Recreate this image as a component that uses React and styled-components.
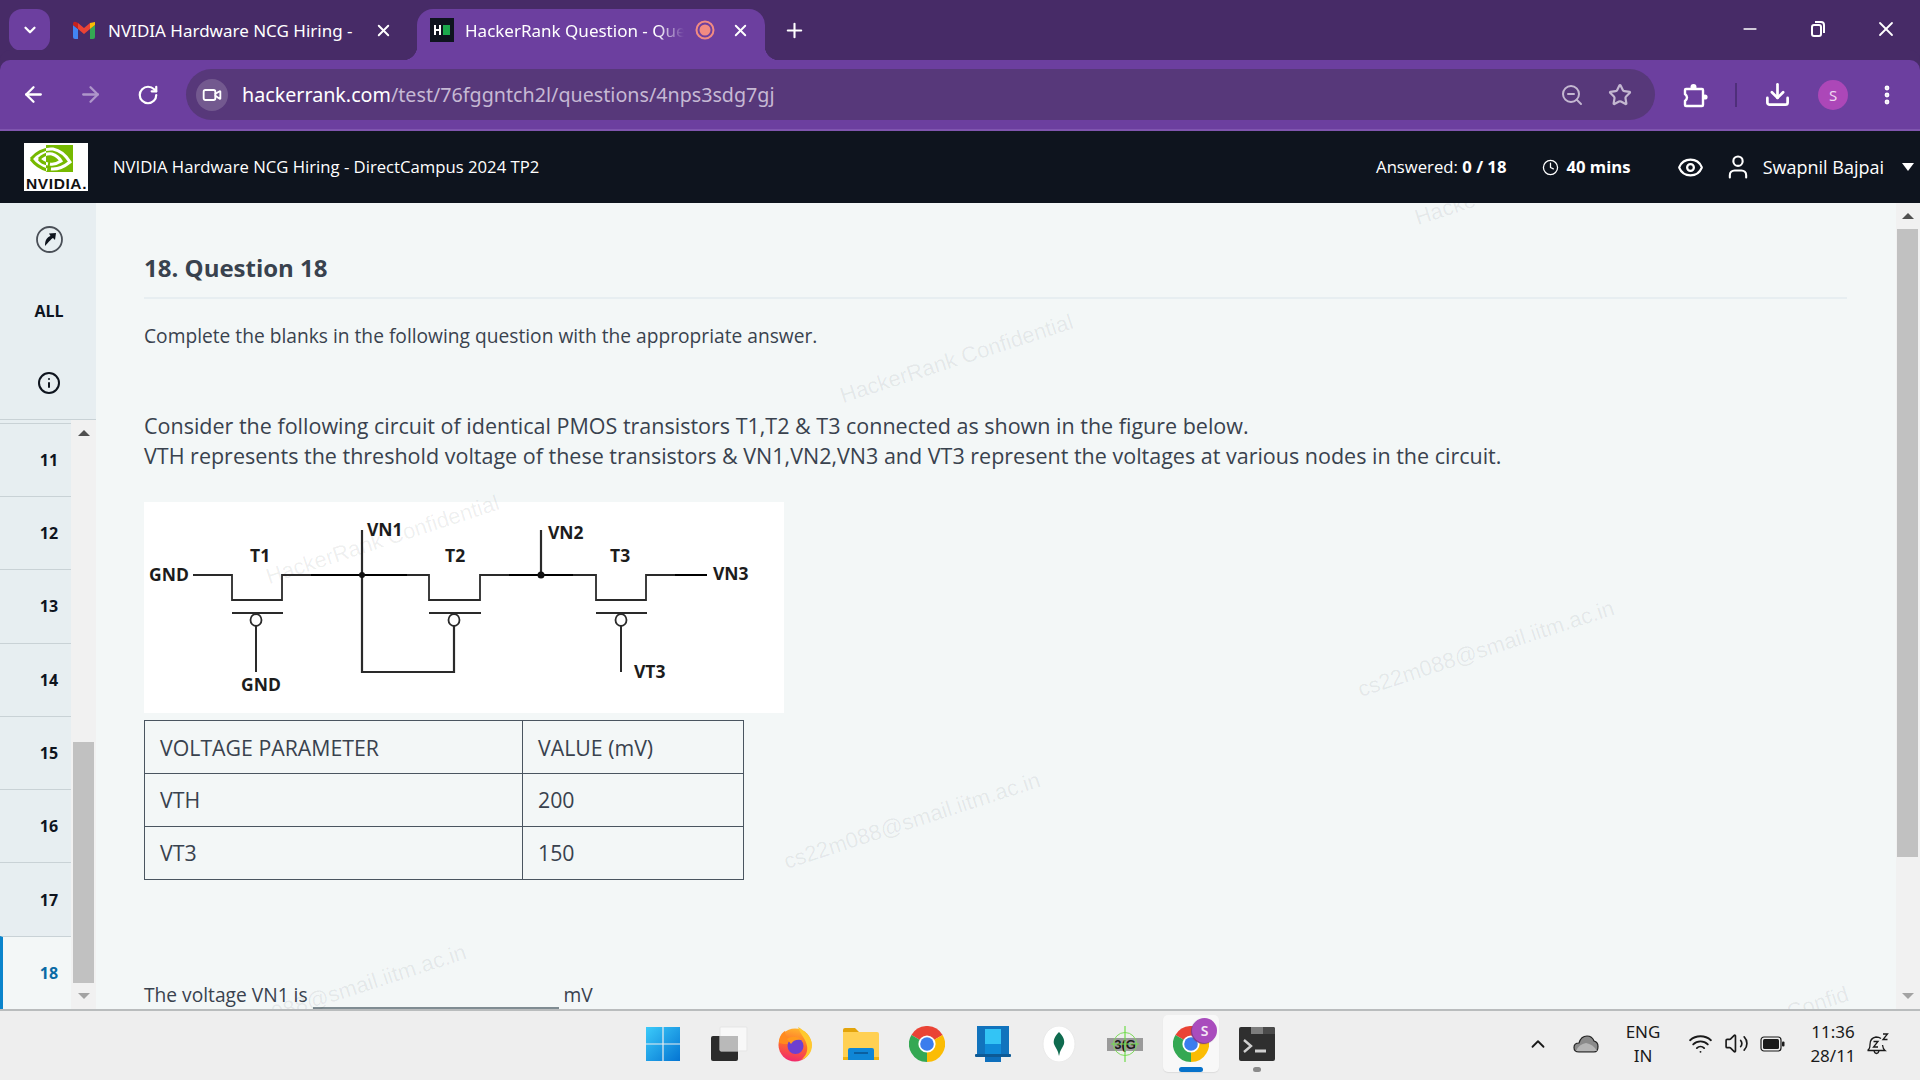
import styled, { createGlobalStyle } from 'styled-components'
import {
  ArrowLeft,
  ArrowRight,
  ChevronDown,
  ChevronUp,
  Clock,
  Download,
  Eye,
  Info,
  Minus,
  MoreVertical,
  Plus,
  RotateCw,
  Star,
  User,
  Video,
  Volume2,
  Wifi,
  X,
  ZoomOut,
} from 'lucide-react'

const QUESTION_NUMBERS = [11, 12, 13, 14, 15, 16, 17, 18]

const WATERMARKS = [
  { text: 'Hacke', x: 1318, y: -7 },
  { text: 'HackerRank Confidential', x: 739, y: 143 },
  { text: 'HackerRank Confidential', x: 165, y: 324 },
  { text: 'cs22m088@smail.iitm.ac.in', x: 1256, y: 433 },
  { text: 'cs22m088@smail.iitm.ac.in', x: 682, y: 605 },
  { text: 'cs22m088@smail.iitm.ac.in', x: 108, y: 777 },
  { text: 'HackerRank Confid', x: 1566, y: 807 },
]

export default function App() {
  return (
    <>
      <GlobalStyle />
      <Page>
        <TabStrip>
          <TabSwitcher>
            <ChevronDown size={18} strokeWidth={3} />
          </TabSwitcher>
          <InactiveTab>
            <GmailIcon />
            <TabTitle>NVIDIA Hardware NCG Hiring -</TabTitle>
            <X size={19} strokeWidth={2.4} />
          </InactiveTab>
          <ActiveTab>
            <HackerRankIcon />
            <FadedTabTitle>HackerRank Question - Que</FadedTabTitle>
            <RecordIcon />
            <ActiveClose size={19} strokeWidth={2.4} />
          </ActiveTab>
          <NewTab>
            <Plus size={23} strokeWidth={2.2} />
          </NewTab>
          <WindowControls>
            <WindowButton>
              <Minus size={20} strokeWidth={2} />
            </WindowButton>
            <WindowButton>
              <RestoreIcon />
            </WindowButton>
            <WindowButton>
              <X size={24} strokeWidth={1.8} />
            </WindowButton>
          </WindowControls>
        </TabStrip>

        <Toolbar>
          <NavButton>
            <ArrowLeft size={25} strokeWidth={2.2} />
          </NavButton>
          <NavButton $disabled>
            <ArrowRight size={25} strokeWidth={2.2} />
          </NavButton>
          <NavButton>
            <RotateCw size={22} strokeWidth={2.4} />
          </NavButton>
          <AddressBar>
            <AddressChip>
              <Video size={20} strokeWidth={2.2} />
            </AddressChip>
            <Url>
              <b>hackerrank.com</b>/test/76fggntch2l/questions/4nps3sdg7gj
            </Url>
            <AddressActions>
              <ZoomOut size={24} strokeWidth={2} />
              <Star size={24} strokeWidth={2.2} />
            </AddressActions>
          </AddressBar>
          <ToolbarActions>
            <ExtensionIcon />
            <ToolbarSeparator />
            <Download size={27} strokeWidth={2.4} />
            <Avatar>S</Avatar>
            <MoreVertical size={24} strokeWidth={2.8} />
          </ToolbarActions>
        </Toolbar>

        <Header>
          <Logo>
            <NvidiaEye />
            <LogoText>NVIDIA.</LogoText>
          </Logo>
          <TestTitle>NVIDIA Hardware NCG Hiring - DirectCampus 2024 TP2</TestTitle>
          <HeaderRight>
            <HeaderText>
              Answered: <b>0 / 18</b>
            </HeaderText>
            <HeaderItem $gap={36}>
              <Clock size={17} strokeWidth={1.8} />
            </HeaderItem>
            <HeaderItem $gap={7}>
              <HeaderText>
                <b>40 mins</b>
              </HeaderText>
            </HeaderItem>
            <HeaderItem $gap={46}>
              <Eye size={27} strokeWidth={2} />
            </HeaderItem>
            <HeaderItem $gap={20}>
              <User size={28} strokeWidth={1.8} />
            </HeaderItem>
            <HeaderItem $gap={11}>
              <UserName>Swapnil Bajpai</UserName>
            </HeaderItem>
            <Caret />
          </HeaderRight>
        </Header>

        <Body>
          <Sidebar>
            <SideTools>
              <SideTool>
                <CompassIcon />
              </SideTool>
              <SideTool>
                <AllLabel>ALL</AllLabel>
              </SideTool>
              <SideTool>
                <Info size={24} strokeWidth={2} />
              </SideTool>
            </SideTools>
            <QuestionNav>
              <QuestionList>
                {QUESTION_NUMBERS.map(number => (
                  <QuestionRow key={number} $active={number === 18}>
                    {number}
                  </QuestionRow>
                ))}
              </QuestionList>
              <NavScrollbar>
                <ArrowUp />
                <NavTrack>
                  <NavThumb />
                </NavTrack>
                <ArrowDown />
              </NavScrollbar>
            </QuestionNav>
          </Sidebar>

          <Main>
            <Content>
              <QuestionTitle>18. Question 18</QuestionTitle>
              <Instruction>
                Complete the blanks in the following question with the
                appropriate answer.
              </Instruction>
              <Statement>
                Consider the following circuit of identical PMOS transistors
                T1,T2 &amp; T3 connected as shown in the figure below.
                <br />
                VTH represents the threshold voltage of these transistors &amp;
                VN1,VN2,VN3 and VT3 represent the voltages at various nodes in
                the circuit.
              </Statement>
              <Circuit />
              <ParamTable>
                <tbody>
                  <tr>
                    <td>VOLTAGE PARAMETER</td>
                    <td>VALUE (mV)</td>
                  </tr>
                  <tr>
                    <td>VTH</td>
                    <td>200</td>
                  </tr>
                  <tr>
                    <td>VT3</td>
                    <td>150</td>
                  </tr>
                </tbody>
              </ParamTable>
              <AnswerLine>
                The voltage VN1 is
                <Blank />
                mV
              </AnswerLine>
            </Content>
            <PageScrollbar>
              <ArrowUp />
              <PageTrack>
                <PageThumb />
              </PageTrack>
              <ArrowDown />
            </PageScrollbar>
            <WatermarkLayer>
              {WATERMARKS.map(mark => (
                <Watermark key={mark.x} $x={mark.x} $y={mark.y}>
                  {mark.text}
                </Watermark>
              ))}
            </WatermarkLayer>
          </Main>
        </Body>

        <Taskbar>
          <span />
          <TaskIcons>
            <TaskIcon>
              <WindowsIcon />
            </TaskIcon>
            <TaskIcon>
              <TaskViewIcon />
            </TaskIcon>
            <TaskIcon>
              <FirefoxIcon />
            </TaskIcon>
            <TaskIcon>
              <FolderIcon />
            </TaskIcon>
            <TaskIcon>
              <ChromeIcon />
            </TaskIcon>
            <TaskIcon>
              <DeviceIcon />
            </TaskIcon>
            <TaskIcon>
              <MongoIcon />
            </TaskIcon>
            <TaskIcon>
              <CrosshairIcon />
            </TaskIcon>
            <TaskIcon $active>
              <ChromeIcon />
              <ProfileBadge>S</ProfileBadge>
            </TaskIcon>
            <TaskIcon $running>
              <TerminalIcon />
            </TaskIcon>
          </TaskIcons>
          <Tray>
            <TrayCell $width={32}>
              <ChevronUp size={22} strokeWidth={2} />
            </TrayCell>
            <TrayCell $width={64}>
              <CloudIcon />
            </TrayCell>
            <TrayCell $width={50}>
              <TrayText>
                ENG
                <br />
                IN
              </TrayText>
            </TrayCell>
            <TrayCell $width={36} $gap={14}>
              <Wifi size={25} strokeWidth={1.8} />
            </TrayCell>
            <TrayCell $width={36}>
              <Volume2 size={25} strokeWidth={1.6} />
            </TrayCell>
            <TrayCell $width={36}>
              <BatteryIcon />
            </TrayCell>
            <TrayCell $width={66} $gap={10}>
              <TrayText>
                11:36
                <br />
                28/11
              </TrayText>
            </TrayCell>
            <TrayCell $width={24}>
              <BellIcon />
            </TrayCell>
          </Tray>
        </Taskbar>
      </Page>
    </>
  )
}

function GmailIcon() {
  return (
    <svg width="24" height="18" viewBox="0 0 24 18" style={{ flexShrink: 0 }}>
      <path d="M1 4v12q0 2 2 2h3V8z" fill="#4285f4" />
      <path d="M23 4v12q0 2-2 2h-3V8z" fill="#34a853" />
      <path d="M18 2l5-1v3l-5 4z" fill="#fbbc04" />
      <path d="M6 8V2l6 5 6-5v6l-6 5z" fill="#ea4335" />
      <path d="M1 4V3q0-3 3-2l2 1v6z" fill="#c5221f" />
    </svg>
  )
}

function HackerRankIcon() {
  return (
    <svg width="24" height="24" viewBox="0 0 24 24" style={{ flexShrink: 0 }}>
      <rect width="24" height="24" fill="#0e141e" />
      <path d="M4 7h2v4h3V7h2v10H9v-4H6v4H4z" fill="#fff" />
      <rect x="13" y="7" width="7" height="10" fill="#1ba94c" />
    </svg>
  )
}

function RecordIcon() {
  return (
    <svg width="20" height="20" viewBox="0 0 20 20" style={{ flexShrink: 0 }}>
      <circle cx="10" cy="10" r="8.5" fill="none" stroke="#f28b82" strokeWidth="2" />
      <circle cx="10" cy="10" r="5.5" fill="#f28b82" />
    </svg>
  )
}

function RestoreIcon() {
  return (
    <svg width="20" height="20" viewBox="0 0 20 20" fill="none" stroke="#fff" strokeWidth="2">
      <rect x="4" y="6" width="9" height="11" rx="2" />
      <path d="M7 3h6q3 0 3 3v8" />
    </svg>
  )
}

function ExtensionIcon() {
  return (
    <svg width="26" height="26" viewBox="0 0 26 26">
      <path
        d="M4 7H20Q21 7 21 8V23Q21 24 20 24H4Q3 24 3 23V19Q7 15.500 3 12V8Q3 7 4 7z"
        fill="none"
        stroke="#fff"
        strokeWidth="2.400"
      />
      <circle cx="11.500" cy="5" r="3" fill="#fff" />
      <circle cx="23" cy="15" r="2.600" fill="#fff" />
    </svg>
  )
}

function NvidiaEye() {
  return (
    <LogoEye width="48" height="28" viewBox="0 0 48 28" fill="none" strokeWidth="3">
      <defs>
        <linearGradient id="eye" gradientUnits="userSpaceOnUse" x1="0" x2="48" y1="0" y2="0">
          <stop offset="0.354" stopColor="#76b900" />
          <stop offset="0.354" stopColor="#fff" />
        </linearGradient>
      </defs>
      <rect x="17" width="27" height="27" fill="#76b900" />
      <g stroke="url(#eye)">
        <path d="M2 14Q11 3 24 4Q34 6 41 17Q31 25 22 24" />
        <path d="M10 14Q16 8 23 9Q29 11 32 16Q26 20 21 19" />
        <path d="M2 14Q8 22 18 25" />
        <path d="M10 14Q13 18 19 19" />
      </g>
    </LogoEye>
  )
}

function CompassIcon() {
  return (
    <svg width="27" height="27" viewBox="0 0 27 27">
      <circle cx="13.500" cy="13.500" r="12.500" fill="none" stroke="#4a4f57" strokeWidth="1.800" />
      <path d="M9 20c0-6 2-8.500 5.500-10L13 7.500l7-.5-1 7-2-2c-2.500 1.500-4 4-8 8z" fill="#0e141e" />
    </svg>
  )
}

function WindowsIcon() {
  return (
    <svg width="36" height="36" viewBox="0 0 36 36">
      <defs>
        <linearGradient id="win" x1="0" y1="0" x2="1" y2="1">
          <stop offset="0" stopColor="#3ccbfa" />
          <stop offset="1" stopColor="#0474d2" />
        </linearGradient>
      </defs>
      <path d="M1 1h16.400v16.400H1zM18.600 1H35v16.400H18.600zM1 18.600h16.400V35H1zM18.600 18.600H35V35H18.600z" fill="url(#win)" />
    </svg>
  )
}

function TaskViewIcon() {
  return (
    <svg width="38" height="36" viewBox="0 0 38 36">
      <rect x="1" y="10" width="27" height="25" rx="2" fill="#2b2b2b" />
      <rect x="10" y="1" width="27" height="24" rx="1" fill="#f8f8f8" stroke="#e5e5e5" />
      <rect x="10" y="10" width="18" height="15" fill="#b9b9b9" />
    </svg>
  )
}

function FirefoxIcon() {
  return (
    <svg width="36" height="36" viewBox="0 0 36 36">
      <defs>
        <linearGradient id="fox" x1="0.600" y1="0" x2="0.400" y2="1">
          <stop offset="0" stopColor="#ffb52e" />
          <stop offset="0.500" stopColor="#ff6a2b" />
          <stop offset="1" stopColor="#f0286e" />
        </linearGradient>
      </defs>
      <circle cx="18" cy="19" r="16.500" fill="url(#fox)" />
      <path d="M21 1c7 4 14 10 14 18 0 8-5 13-11 15 5-4 7-9 6-14-1-7-7-12-9-19z" fill="#ffc92e" />
      <path d="M2 17C2 10 5 7 8 5c0 3 1 5 3 7l5 1-5 5c-3 0-6 0-9-1z" fill="#ff8a1e" />
      <circle cx="18.500" cy="20" r="8" fill="#6e3fd0" />
      <path d="M10 13c4-3 11-3 15 1-5-1-9 0-11 4z" fill="#ff9a1e" />
    </svg>
  )
}

function FolderIcon() {
  return (
    <svg width="36" height="32" viewBox="0 0 36 32">
      <path d="M0 2q0-2 2-2h10l4 4h-16z" fill="#e3a40b" />
      <path d="M0 4h34q2 0 2 2v26H0z" fill="#ffd053" />
      <path d="M0 30v-1h36v3H0z" fill="#f0b30f" />
      <path d="M5 32V22q0-2 2-2h22q2 0 2 2v10z" fill="#0f86d6" />
      <rect x="11" y="24" width="14" height="2" fill="#0a5fa0" />
    </svg>
  )
}

function ChromeIcon() {
  return (
    <svg width="36" height="36" viewBox="-18 -18 36 36">
      <path d="M0 0L15.600-9A18 18 0 0 0-15.600-9z" fill="#ea4335" />
      <path d="M0 0L-15.600-9A18 18 0 0 0 0 18z" fill="#34a853" />
      <path d="M0 0L0 18A18 18 0 0 0 15.600-9z" fill="#fbbc04" />
      <circle r="8.600" fill="#fff" />
      <circle r="6.800" fill="#3b7ded" />
    </svg>
  )
}

function DeviceIcon() {
  return (
    <svg width="36" height="36" viewBox="0 0 36 36">
      <path d="M2 0h32v30H2z" fill="#1173bd" />
      <rect y="28" width="36" height="3" rx="1" fill="#0d5a96" />
      <path d="M10 3h16v15H10z" fill="#33c4f5" />
      <path d="M10 18h16v10H10z" fill="#0f8ad8" />
      <path d="M10 31h16v5H10z" fill="#0d6fbd" />
    </svg>
  )
}

function MongoIcon() {
  return (
    <svg width="34" height="36" viewBox="0 0 34 36">
      <ellipse cx="17" cy="18" rx="16" ry="18" fill="#fff" stroke="#eaeaea" />
      <path d="M17 6c4 4 6 8 5 12-1 3-3 5-4 8l-1 4-1-4c-1-3-3-5-4-8-1-4 1-8 5-12z" fill="#0f6b4f" />
    </svg>
  )
}

function CrosshairIcon() {
  return (
    <svg width="36" height="46" viewBox="0 0 36 46">
      <rect x="0" y="17" width="36" height="13" fill="#9a9a9a" />
      <text x="18" y="28" fontFamily="'Liberation Sans', sans-serif" fontSize="13" fontWeight="700" textAnchor="middle" fill="#1a1a1a">
        3(G
      </text>
      <circle cx="18" cy="23" r="11.500" fill="none" stroke="#7fdc5c" strokeWidth="1" />
      <path d="M18 5v36M4 23h28" stroke="#6fdc4a" strokeWidth="1.200" />
    </svg>
  )
}

function TerminalIcon() {
  return (
    <svg width="36" height="36" viewBox="0 0 36 36">
      <rect y="1" width="36" height="34" rx="2" fill="#2f2f2f" />
      <path d="M12 1h12v7H12z" fill="#7d7d7d" />
      <path d="M24 1h10q2 0 2 2v5H24z" fill="#4a4a4a" />
      <path d="M5 14l7 6-7 6" fill="none" stroke="#d0d0d0" strokeWidth="2.400" />
      <path d="M16 25h11" stroke="#d0d0d0" strokeWidth="3" />
    </svg>
  )
}

function CloudIcon() {
  return (
    <svg width="26" height="18" viewBox="0 0 26 18">
      <path d="M6 17q-5 0-5-4.500t5-4.500q2-7 8-7 5 0 7 5 4 1 4 5.500 0 5.500-4 5.500z" fill="#8a8a8a" stroke="#222" strokeWidth="1.200" />
      <path d="M3 16q3-7 10-8 7 1 11 8z" fill="#b5b5b5" />
    </svg>
  )
}

function BatteryIcon() {
  return (
    <svg width="25" height="16" viewBox="0 0 25 16">
      <rect x="1" y="1" width="20" height="14" rx="3" fill="none" stroke="#1a1a1a" strokeWidth="1.200" />
      <rect x="3" y="3" width="16" height="10" rx="1.500" fill="#1a1a1a" />
      <rect x="22" y="5.500" width="2.500" height="5" rx="1" fill="#1a1a1a" />
    </svg>
  )
}

function BellIcon() {
  return (
    <svg width="24" height="24" viewBox="0 0 24 24" fill="none" stroke="#1a1a1a" strokeWidth="1.300">
      <path d="M1.500 18.500q2.500-1.500 2.500-6 0-6.500 6-7.500 3 0 5 1.500M1.500 18.500H19q-2-1.500-2.500-5.500" />
      <path d="M8 18.500q.5 3 2.500 3t2.500-3" />
      <path d="M7.500 9.500h4.500l-4.500 5.500h4.500M17 2h4.500L17 7.500h4.500" />
    </svg>
  )
}

function Circuit() {
  const transistors = [
    { left: 88, right: 138, gate: 112, stem: true },
    { left: 285, right: 336, gate: 310, stem: false },
    { left: 452, right: 502, gate: 477, stem: true },
  ]
  const labels = [
    { text: 'GND', x: 5, y: 79 },
    { text: 'T1', x: 106, y: 60 },
    { text: 'VN1', x: 223, y: 34 },
    { text: 'T2', x: 301, y: 60 },
    { text: 'VN2', x: 404, y: 37 },
    { text: 'T3', x: 466, y: 60 },
    { text: 'VN3', x: 569, y: 78 },
    { text: 'GND', x: 97, y: 189 },
    { text: 'VT3', x: 490, y: 176 },
  ]
  return (
    <CircuitFigure viewBox="0 0 640 211">
      <g fill="none" stroke="#2a2a2a" strokeWidth="1.800">
        <path d="M49 73H88V98H138V73H285V98H336V73H452V98H502V73H563" />
        <path d="M167 73H263M365 73H429M531 73H563" stroke="#000" strokeWidth="2.200" />
        <path d="M218 28V170H310V124" strokeWidth="2.200" />
        <path d="M397 28V73" strokeWidth="2.200" />
        {transistors.map(item => (
          <g key={item.left}>
            <path d={`M${item.left} 111H${item.right + 1}`} />
            <ellipse cx={item.gate} cy="118" rx="5.500" ry="6" />
            {item.stem && <path d={`M${item.gate} 124V170`} strokeWidth="2" />}
          </g>
        ))}
      </g>
      <circle cx="218" cy="73" r="3" fill="#111" />
      <circle cx="397" cy="73" r="3.500" fill="#111" />
      <g fontFamily="'Open Sans', sans-serif" fontSize="17.500" fontWeight="700" fill="#1c1c1c">
        {labels.map(label => (
          <text key={label.text + label.x} x={label.x} y={label.y}>
            {label.text}
          </text>
        ))}
      </g>
    </CircuitFigure>
  )
}

const GlobalStyle = createGlobalStyle`
  html, body {
    margin: 0;
    padding: 0;
    height: 100%;
    overflow: hidden;
  }
  * {
    box-sizing: border-box;
  }
  body {
    font-family: 'Open Sans', sans-serif;
    color: #39424e;
  }
`
const Page = styled.div`
  width: 1920px;
  height: 1080px;
  display: flex;
  flex-direction: column;
  overflow: hidden;
`
const TabStrip = styled.div`
  height: 60px;
  flex-shrink: 0;
  display: flex;
  padding: 9px 0 0 9px;
  background: #472b67;
  color: #fff;
  font-family: 'Noto Sans', sans-serif;
  font-size: 17px;
`
const TabSwitcher = styled.div`
  width: 41px;
  height: 42px;
  border-radius: 13px;
  background: #6c3f9f;
  display: flex;
  align-items: center;
  justify-content: center;
`
const InactiveTab = styled.div`
  width: 367px;
  height: 51px;
  padding: 0 24px 9px 22px;
  display: flex;
  align-items: center;
  gap: 12px;
`
const ActiveTab = styled.div`
  position: relative;
  width: 348px;
  height: 51px;
  padding: 0 15px 9px 13px;
  display: flex;
  align-items: center;
  gap: 11px;
  background: #6c3f9f;
  border-radius: 16px 16px 0 0;

  &::before,
  &::after {
    content: '';
    position: absolute;
    bottom: 0;
    width: 14px;
    height: 14px;
  }
  &::before {
    left: -14px;
    background: radial-gradient(circle at 0 0, transparent 14px, #6c3f9f 14.500px);
  }
  &::after {
    right: -14px;
    background: radial-gradient(circle at 100% 0, transparent 14px, #6c3f9f 14.500px);
  }
`
const TabTitle = styled.span`
  flex: 1;
  min-width: 0;
  white-space: nowrap;
`
const FadedTabTitle = styled(TabTitle)`
  -webkit-mask-image: linear-gradient(90deg, #000 88%, transparent);
  mask-image: linear-gradient(90deg, #000 88%, transparent);
`
const ActiveClose = styled(X)`
  margin-left: 5px;
  flex-shrink: 0;
`
const NewTab = styled.div`
  margin-left: 18px;
  height: 42px;
  display: flex;
  align-items: center;
`
const WindowControls = styled.div`
  margin-left: auto;
  display: flex;
`
const WindowButton = styled.div`
  width: 68px;
  height: 32px;
  margin-top: 4px;
  display: flex;
  align-items: center;
  justify-content: center;
`
const Toolbar = styled.div`
  height: 71px;
  flex-shrink: 0;
  display: flex;
  align-items: flex-start;
  padding: 9px 21px 0 5px;
  background: #6c3f9f;
  border-bottom: 2px solid #7f55ae;
  border-radius: 10px 10px 0 0;
  color: #fff;
  box-shadow: 0 -10px 0 #472b67;
`
const NavButton = styled.div`
  width: 57px;
  height: 51px;
  display: flex;
  align-items: center;
  justify-content: center;
  opacity: ${props => (props.$disabled ? 0.45 : 1)};
`
const AddressBar = styled.div`
  flex: 1;
  height: 51px;
  margin-left: 10px;
  padding: 0 23px 0 10px;
  display: flex;
  align-items: center;
  border-radius: 26px;
  background: #57387a;
`
const AddressChip = styled.div`
  width: 32px;
  height: 32px;
  border-radius: 50%;
  background: #73598f;
  display: flex;
  align-items: center;
  justify-content: center;
`
const Url = styled.div`
  margin-left: 14px;
  font-family: 'Noto Sans', sans-serif;
  font-size: 19.700px;
  color: #c6b9d4;

  b {
    font-weight: 400;
    color: #fff;
  }
`
const AddressActions = styled.div`
  margin-left: auto;
  display: flex;
  gap: 24px;
  color: #c4b8d1;
`
const ToolbarActions = styled.div`
  margin-left: 27px;
  height: 51px;
  display: flex;
  align-items: center;
  gap: 27px;
`
const ToolbarSeparator = styled.div`
  width: 2px;
  height: 24px;
  background: #4f2f7a;
`
const Avatar = styled.div`
  width: 30px;
  height: 30px;
  border-radius: 50%;
  background: #ac47b8;
  display: flex;
  align-items: center;
  justify-content: center;
  font-family: 'Noto Sans', sans-serif;
  font-size: 15px;
  color: #f0d8f2;
`
const Header = styled.header`
  height: 72px;
  flex-shrink: 0;
  display: flex;
  align-items: center;
  padding: 0 6px 0 24px;
  background: #0e141e;
  color: #fff;
  font-size: 16.700px;
`
const Logo = styled.div`
  width: 64px;
  height: 48px;
  padding: 2px 0 0 5px;
  background: #fff;
  overflow: hidden;
`
const LogoEye = styled.svg`
  display: block;
`
const LogoText = styled.div`
  margin: 3px 0 0 -3px;
  font-family: 'Liberation Sans', sans-serif;
  font-weight: 700;
  font-size: 15.500px;
  line-height: 15px;
  color: #111;
  letter-spacing: 0.600px;
  white-space: nowrap;
`
const TestTitle = styled.div`
  margin: 0 0 2px 25px;
`
const HeaderRight = styled.div`
  margin-left: auto;
  display: flex;
  align-items: center;
`
const HeaderText = styled.span`
  margin-bottom: 2px;
`
const HeaderItem = styled.div`
  margin-left: ${props => props.$gap}px;
  display: flex;
  align-items: center;
`
const UserName = styled.span`
  font-size: 18px;
`
const Caret = styled.div`
  margin-left: 18px;
  width: 0;
  height: 0;
  border-left: 6px solid transparent;
  border-right: 6px solid transparent;
  border-top: 8px solid #fff;
`
const Body = styled.div`
  flex: 1;
  min-height: 0;
  display: flex;
`
const Sidebar = styled.aside`
  width: 96px;
  flex-shrink: 0;
  display: flex;
  flex-direction: column;
  background: #e7eef1;
`
const SideTools = styled.div`
  height: 217px;
  flex-shrink: 0;
  display: grid;
  grid-template-rows: repeat(3, 72px);
  border-bottom: 1px solid #c9d2d6;
`
const SideTool = styled.div`
  padding-left: 2px;
  display: flex;
  align-items: center;
  justify-content: center;
  color: #0e141e;
`
const AllLabel = styled.span`
  font-size: 16px;
  font-weight: 700;
`
const QuestionNav = styled.div`
  flex: 1;
  min-height: 0;
  display: flex;
`
const QuestionList = styled.div`
  width: 71px;
  padding-top: 3px;
  display: flex;
  flex-direction: column;
  justify-content: flex-end;
  overflow: hidden;
`
const QuestionRow = styled.div`
  height: 73.300px;
  flex-shrink: 0;
  display: flex;
  align-items: center;
  justify-content: center;
  padding-left: ${props => (props.$active ? '24px' : '27px')};
  font-size: 16px;
  font-weight: 700;
  color: ${props => (props.$active ? '#0a6aa5' : '#0e141e')};
  background: ${props => (props.$active ? '#f3f7f7' : 'transparent')};
  border-top: 1px solid #c9d2d6;
  border-left: ${props => (props.$active ? '3px solid #0a84cc' : '0')};
`
const NavScrollbar = styled.div`
  width: 25px;
  display: flex;
  flex-direction: column;
  background: #f1f1f1;
`
const NavTrack = styled.div`
  flex: 1;
  min-height: 0;
  padding: 0 2px;
  display: flex;
  flex-direction: column;
  justify-content: flex-end;
`
const NavThumb = styled.div`
  height: 241px;
  background: #c1c1c1;
`
const ArrowUp = styled.div`
  flex-shrink: 0;
  height: 26px;
  display: flex;
  align-items: center;
  justify-content: center;

  &::before {
    content: '';
    border-left: 6px solid transparent;
    border-right: 6px solid transparent;
    border-bottom: 6px solid #505050;
  }
`
const ArrowDown = styled.div`
  flex-shrink: 0;
  height: 26px;
  display: flex;
  align-items: center;
  justify-content: center;

  &::before {
    content: '';
    border-left: 6px solid transparent;
    border-right: 6px solid transparent;
    border-top: 6px solid #a3a3a3;
  }
`
const Main = styled.main`
  position: relative;
  flex: 1;
  min-width: 0;
  display: flex;
  background: #f3f7f7;
  overflow: hidden;
`
const Content = styled.div`
  flex: 1;
  min-width: 0;
  padding: 50px 49px 0 48px;
`
const QuestionTitle = styled.h1`
  margin: 0;
  padding-bottom: 14px;
  border-bottom: 2px solid #e7eef1;
  font-size: 24px;
  line-height: 30px;
  font-weight: 700;
`
const Instruction = styled.p`
  margin: 24px 0 0;
  font-size: 19.200px;
  line-height: 26px;
`
const Statement = styled.p`
  margin: 62px 0 0;
  font-size: 21.500px;
  line-height: 30px;
`
const CircuitFigure = styled.svg`
  display: block;
  width: 640px;
  height: 211px;
  margin-top: 31px;
  background: #fff;
`
const ParamTable = styled.table`
  width: 600px;
  margin-top: 7px;
  border-collapse: collapse;
  font-size: 21.300px;

  td {
    height: 53px;
    border: 1px solid #4a5560;
    padding: 0 15px;
  }
  td:first-child {
    width: 378px;
  }
  tr + tr td {
    padding-bottom: 1px;
  }
`
const AnswerLine = styled.div`
  margin-top: 100px;
  display: flex;
  font-size: 19.200px;
  line-height: 30px;
`
const Blank = styled.span`
  width: 246px;
  height: 29px;
  margin: 0 5px 0 5px;
  border-bottom: 2px solid #7f8c92;
`
const PageScrollbar = styled.div`
  width: 24px;
  flex-shrink: 0;
  display: flex;
  flex-direction: column;
  background: #f1f1f1;
`
const PageTrack = styled.div`
  flex: 1;
  min-height: 0;
  padding: 0 2px 0 1px;
`
const PageThumb = styled.div`
  height: 628px;
  background: #c1c1c1;
`
const WatermarkLayer = styled.div`
  position: absolute;
  inset: 0;
  pointer-events: none;
  overflow: hidden;
`
const Watermark = styled.span`
  position: absolute;
  left: ${props => props.$x}px;
  top: ${props => props.$y}px;
  transform: rotate(-18deg);
  font-family: 'Liberation Sans', sans-serif;
  font-size: 22px;
  white-space: nowrap;
  color: rgba(14, 20, 30, 0.07);
`
const Taskbar = styled.footer`
  height: 71px;
  flex-shrink: 0;
  padding-bottom: 4px;
  display: grid;
  grid-template-columns: 1fr auto 1fr;
  align-items: center;
  background: #eeeeee;
  border-top: 2px solid #b9bcbd;
`
const TaskIcons = styled.div`
  display: flex;
  gap: 10px;
`
const TaskIcon = styled.div`
  position: relative;
  width: 56px;
  height: 57px;
  display: flex;
  align-items: center;
  justify-content: center;
  border-radius: 5px;
  background: ${props => (props.$active ? '#f8f8f8' : 'transparent')};
  box-shadow: ${props => (props.$active ? '0 1px 1px #dcdcdc' : 'none')};

  &::after {
    content: '';
    display: ${props => (props.$active || props.$running ? 'block' : 'none')};
    position: absolute;
    bottom: 0;
    left: ${props => (props.$active ? '16px' : '24px')};
    width: ${props => (props.$active ? '24px' : '8px')};
    height: 5px;
    border-radius: 3px;
    background: ${props => (props.$active ? '#0672cb' : '#8a8a8a')};
  }
`
const ProfileBadge = styled.span`
  position: absolute;
  top: 3px;
  right: 2px;
  width: 25px;
  height: 25px;
  border-radius: 50%;
  background: #a94cbd;
  box-shadow: -1px 1px 1px #7b3a8a;
  color: #f3e6f5;
  font-family: 'Noto Sans', sans-serif;
  font-size: 14px;
  font-weight: 600;
  display: flex;
  align-items: center;
  justify-content: center;
`
const Tray = styled.div`
  justify-self: end;
  padding-right: 30px;
  display: flex;
  align-items: center;
  color: #1a1a1a;
`
const TrayCell = styled.div`
  width: ${props => props.$width}px;
  margin-left: ${props => props.$gap || 0}px;
  display: flex;
  justify-content: center;
`
const TrayText = styled.div`
  font-family: 'Noto Sans', sans-serif;
  font-size: 17px;
  line-height: 24px;
  text-align: center;
`
